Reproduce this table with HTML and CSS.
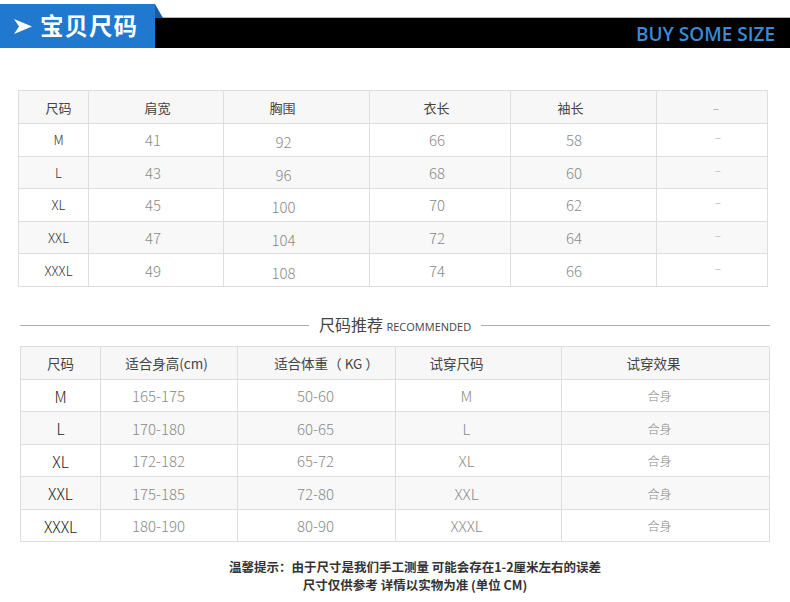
FILE: index.html
```html
<!DOCTYPE html>
<html lang="zh-CN">
<head>
<meta charset="utf-8">
<title>宝贝尺码</title>
<link rel="stylesheet" href="styles.css">
</head>
<body>
<header class="banner">
  <div class="tag">
    <svg class="arrow" width="18" height="15" viewBox="0 0 18 15"><polygon points="0,0 18,7.5 0,15 5,7.5" fill="#fff"/></svg>
    <span class="tag-text">宝贝尺码</span>
  </div>
  <div class="bar"><span class="bar-text">BUY SOME SIZE</span></div>
</header>

<table class="size t1">
  <colgroup><col style="width:70px"><col style="width:135px"><col style="width:146px"><col style="width:141px"><col style="width:146px"><col style="width:111px"></colgroup>
  <tr class="head"><th>尺码</th><th>肩宽</th><th>胸围</th><th>衣长</th><th>袖长</th><th class="dash">–</th></tr>
  <tr><td class="sz">M</td><td>41</td><td>92</td><td>66</td><td>58</td><td class="dash">–</td></tr>
  <tr class="alt"><td class="sz">L</td><td>43</td><td>96</td><td>68</td><td>60</td><td class="dash">–</td></tr>
  <tr><td class="sz">XL</td><td>45</td><td>100</td><td>70</td><td>62</td><td class="dash">–</td></tr>
  <tr class="alt"><td class="sz">XXL</td><td>47</td><td>104</td><td>72</td><td>64</td><td class="dash">–</td></tr>
  <tr><td class="sz">XXXL</td><td>49</td><td>108</td><td>74</td><td>66</td><td class="dash">–</td></tr>
</table>

<div class="divider">
  <span class="line"></span>
  <span class="divider-title">尺码推荐 <small>RECOMMENDED</small></span>
  <span class="line"></span>
</div>

<table class="size t2">
  <colgroup><col style="width:80px"><col style="width:137px"><col style="width:158px"><col style="width:166px"><col style="width:208px"></colgroup>
  <tr class="head"><th>尺码</th><th>适合身高(cm)</th><th>适合体重<span class="paren">（</span><span class="kg">KG</span><span class="paren">）</span></th><th>试穿尺码</th><th>试穿效果</th></tr>
  <tr><td class="sz">M</td><td>165-175</td><td>50-60</td><td>M</td><td class="fit">合身</td></tr>
  <tr class="alt"><td class="sz">L</td><td>170-180</td><td>60-65</td><td>L</td><td class="fit">合身</td></tr>
  <tr><td class="sz">XL</td><td>172-182</td><td>65-72</td><td>XL</td><td class="fit">合身</td></tr>
  <tr class="alt"><td class="sz">XXL</td><td>175-185</td><td>72-80</td><td>XXL</td><td class="fit">合身</td></tr>
  <tr><td class="sz">XXXL</td><td>180-190</td><td>80-90</td><td>XXXL</td><td class="fit">合身</td></tr>
</table>

<p class="note"><span class="note-line">温馨提示：由于尺寸是我们手工测量 可能会存在1-2厘米左右的误差</span><span class="note-line">尺寸仅供参考 详情以实物为准 (单位 CM)</span></p>
</body>
</html>
```

FILE: styles.css
```css
* { box-sizing: border-box; }
html, body { margin: 0; padding: 0; background: #fff; }
body {
  width: 790px;
  font-family: "Noto Sans CJK SC", "Noto Sans", sans-serif;
  color: #444;
}

.banner {
  display: flex;
  align-items: flex-end;
  height: 48px;
  padding-top: 4px;
}
.tag {
  position: relative;
  width: 155px;
  height: 44px;
  background: #2179cf;
  display: flex;
  align-items: center;
  padding-left: 14px;
}
.tag::after {
  content: "";
  position: absolute;
  left: 155px;
  top: 0;
  width: 0;
  height: 0;
  border-bottom: 14px solid #1a5d9f;
  border-right: 8px solid transparent;
}
.arrow { flex: none; margin-right: 8px; }
.tag-text {
  color: #fff;
  font-size: 23.5px;
  font-weight: 700;
  letter-spacing: 1px;
  line-height: 1;
}
.bar {
  flex: 1;
  height: 31px;
  background: #000;
  border-top: 1px solid #b9b9b9;
  display: flex;
  align-items: center;
  justify-content: flex-end;
  padding-right: 15px;
}
.bar-text {
  color: #3a8ad8;
  font-family: "Open Sans", "Noto Sans", sans-serif;
  font-size: 19px;
  font-weight: 600;
  line-height: 1;
  padding-top: 2px;
}

.size {
  border-collapse: collapse;
  table-layout: fixed;
}
.size th, .size td {
  border: 1px solid #dedede;
  padding: 0;
  text-align: center;
  vertical-align: middle;
}
.size th {
  font-weight: 400;
  font-size: 13px;
  color: #444;
  background: #f7f7f7;
}
.size td {
  font-size: 15px;
  font-weight: 300;
  color: #8a8a8a;
}
.size .alt td { background: #f8f8f8; }
.size td.sz { color: #333; font-weight: 300; }

.t1 { margin: 42px 0 0 18px; width: 749px; }
.t1 tr { height: 32.6px; }
.t1 tr.head { height: 33px; }
.t1 td.sz { font-size: 13px; }
.t1 .dash { color: #aaa; font-size: 12px; }
.t1 th:nth-child(1), .t1 td:nth-child(1) { padding-left: 10px; }
.t1 th:nth-child(2) { padding-left: 3px; }
.t1 td:nth-child(2) { padding-right: 6px; }
.t1 th:nth-child(3) { padding-right: 28px; }
.t1 td:nth-child(3) { padding-right: 26px; padding-top: 4px; }
.t1 th:nth-child(4) { padding-right: 7px; }
.t1 td:nth-child(4) { padding-right: 6px; }
.t1 th:nth-child(5) { padding-right: 26px; }
.t1 td:nth-child(5) { padding-right: 19px; }
.t1 th:nth-child(6) { padding-left: 8px; }
.t1 td:nth-child(6) { padding-left: 12px; padding-bottom: 6px; }

.divider {
  display: flex;
  align-items: center;
  margin: 29px 20px 0 20px;
  height: 20px;
}
.divider .line {
  flex: 1;
  height: 1px;
  background: #adadad;
}
.divider-title {
  padding: 0 10px;
  font-size: 16px;
  color: #444;
  line-height: 20px;
}
.divider-title small {
  font-family: "Open Sans", "Noto Sans", sans-serif;
  font-size: 11px;
  color: #444;
}

.t2 { margin: 10px 0 0 20px; width: 749px; }
.t2 tr { height: 32.5px; }
.t2 tr.head { height: 33px; }
.t2 th { font-size: 13.5px; }
.t2 th .kg { margin: 0 3px; }
.t2 td.sz { font-size: 15.5px; color: #222; }
.t2 td { font-size: 15px; }
.t2 td.fit { font-size: 12px; color: #888; }
.t2 th:nth-child(2) { padding-right: 5px; }
.t2 td:nth-child(2) { padding-right: 21px; }
.t2 th:nth-child(3) { padding-left: 20px; }
.t2 td:nth-child(3) { padding-right: 2px; }
.t2 th:nth-child(4) { padding-right: 44px; }
.t2 td:nth-child(4) { padding-right: 24px; }
.t2 th:nth-child(5) { padding-right: 24px; }
.t2 td:nth-child(5) { padding-right: 12px; }

.note {
  margin: 16px 0 0 0;
  padding-left: 40px;
  display: flex;
  flex-direction: column;
  align-items: center;
  gap: 0;
  font-size: 12.5px;
  font-weight: 700;
  color: #333;
}
.note-line {
  display: block;
  line-height: 18px;
  height: 18px;
  white-space: nowrap;
}
```
